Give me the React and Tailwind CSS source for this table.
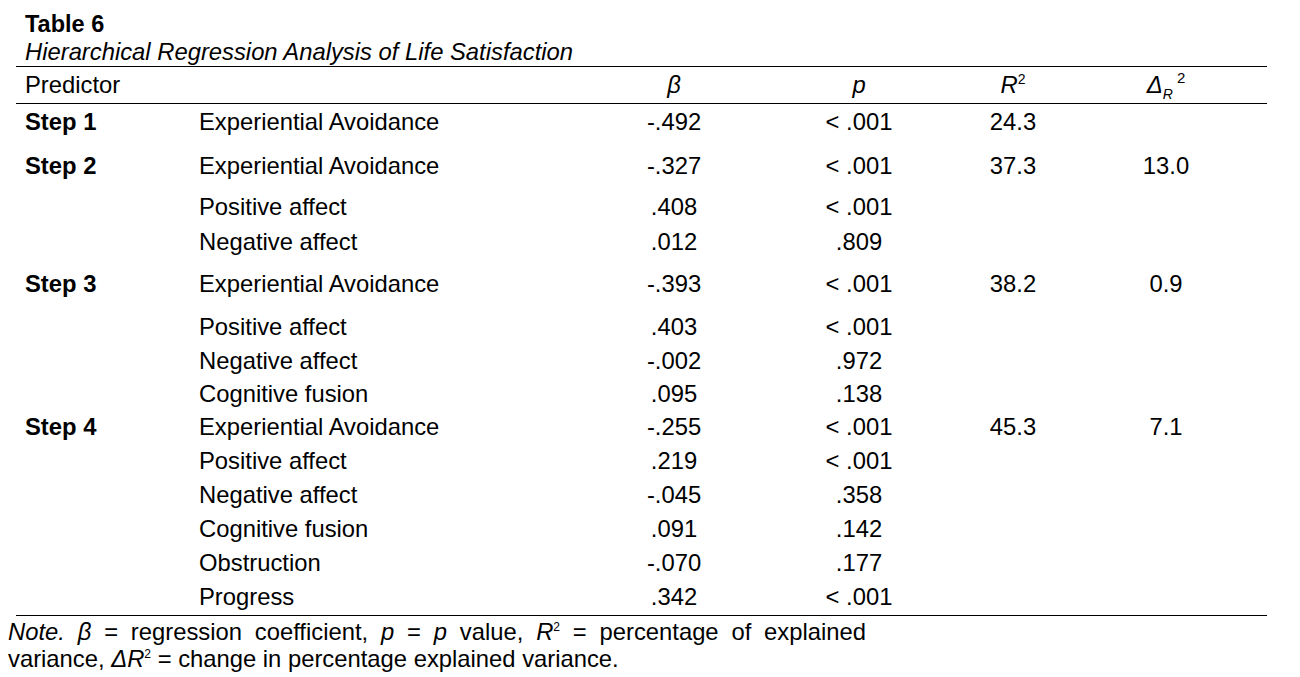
import React from "react";

const rows = [
  { step: "Step 1", pred: "Experiential Avoidance", b: "-.492", p: "< .001", r: "24.3", dr: "", cls: "mt-[1px] h-[34px]" },
  { step: "Step 2", pred: "Experiential Avoidance", b: "-.327", p: "< .001", r: "37.3", dr: "13.0", cls: "mt-[10px] h-[34px]" },
  { step: "", pred: "Positive affect", b: ".408", p: "< .001", r: "", dr: "", cls: "mt-[7px] h-[34px]" },
  { step: "", pred: "Negative affect", b: ".012", p: ".809", r: "", dr: "", cls: "mt-[1px] h-[34px]" },
  { step: "Step 3", pred: "Experiential Avoidance", b: "-.393", p: "< .001", r: "38.2", dr: "0.9", cls: "mt-[8px] h-[34px]" },
  { step: "", pred: "Positive affect", b: ".403", p: "< .001", r: "", dr: "", cls: "mt-[9px] h-[34px]" },
  { step: "", pred: "Negative affect", b: "-.002", p: ".972", r: "", dr: "", cls: "h-[34px]" },
  { step: "", pred: "Cognitive fusion", b: ".095", p: ".138", r: "", dr: "", cls: "h-[33px]" },
  { step: "Step 4", pred: "Experiential Avoidance", b: "-.255", p: "< .001", r: "45.3", dr: "7.1", cls: "h-[33px]" },
  { step: "", pred: "Positive affect", b: ".219", p: "< .001", r: "", dr: "", cls: "h-[34px]" },
  { step: "", pred: "Negative affect", b: "-.045", p: ".358", r: "", dr: "", cls: "h-[34px]" },
  { step: "", pred: "Cognitive fusion", b: ".091", p: ".142", r: "", dr: "", cls: "h-[34px]" },
  { step: "", pred: "Obstruction", b: "-.070", p: ".177", r: "", dr: "", cls: "h-[34px]" },
  { step: "", pred: "Progress", b: ".342", p: "< .001", r: "", dr: "", cls: "h-[34px]" },
];

function Row({ step, pred, b, p, r, dr, cls }) {
  return (
    <div className={"flex items-center pb-[2px] " + cls}>
      <div className="w-[183px] shrink-0 pl-[9px] font-bold">{step}</div>
      <div className="w-[425px] shrink-0">{pred}</div>
      <div className="w-[100px] shrink-0 text-center">{b}</div>
      <div className="ml-[85px] w-[100px] shrink-0 text-center">{p}</div>
      <div className="ml-[54px] w-[100px] shrink-0 text-center">{r}</div>
      <div className="ml-[53px] w-[100px] shrink-0 text-center">{dr}</div>
    </div>
  );
}

export default function App() {
  return (
    <div
      className="w-[1300px] h-[677px] overflow-hidden bg-white text-black text-[23.8px] leading-[27px]"
      style={{ fontFamily: '"Liberation Sans", Arial, sans-serif' }}
    >
      <div className="pl-[25px] pt-[11px] pb-[1px]">
        <div className="font-bold leading-[27px] text-[23.5px]">Table 6</div>
        <div className="italic leading-[27px]">Hierarchical Regression Analysis of Life Satisfaction</div>
      </div>
      <div className="ml-[16px] w-[1251px]">
        <div className="h-px bg-black" />
        <div className="flex h-[36px] items-center pb-[2px]">
          <div className="w-[608px] shrink-0 pl-[9px]">Predictor</div>
          <div className="w-[100px] shrink-0 text-center italic">β</div>
          <div className="ml-[85px] w-[100px] shrink-0 text-center italic">p</div>
          <div className="ml-[54px] w-[100px] shrink-0 text-center italic">
            R<span className="relative top-[-9px] text-[14px] leading-none not-italic">2</span>
          </div>
          <div className="ml-[53px] w-[100px] shrink-0 text-center italic">
            Δ<span className="relative top-[6px] text-[14px] leading-none">R</span>
            <span className="relative top-[-10px] ml-[4px] text-[15px] leading-none not-italic">2</span>
          </div>
        </div>
        <div className="h-px bg-black" />
        {rows.map((row, i) => (
          <Row key={i} {...row} />
        ))}
        <div className="mt-[1px] h-px bg-black" />
      </div>
      <div className="ml-[8px] mt-[2px] w-[858px] text-justify leading-[27px]">
        <span className="italic">Note.</span> <span className="italic">β</span> = regression coefficient,{" "}
        <span className="italic">p</span> = <span className="italic">p</span> value,{" "}
        <span className="italic">R</span>
        <span className="relative top-[-9px] text-[12px] leading-none">2</span> = percentage of explained variance,{" "}
        <span className="italic">ΔR</span>
        <span className="relative top-[-9px] text-[12px] leading-none">2</span> = change in percentage explained variance.
      </div>
    </div>
  );
}
